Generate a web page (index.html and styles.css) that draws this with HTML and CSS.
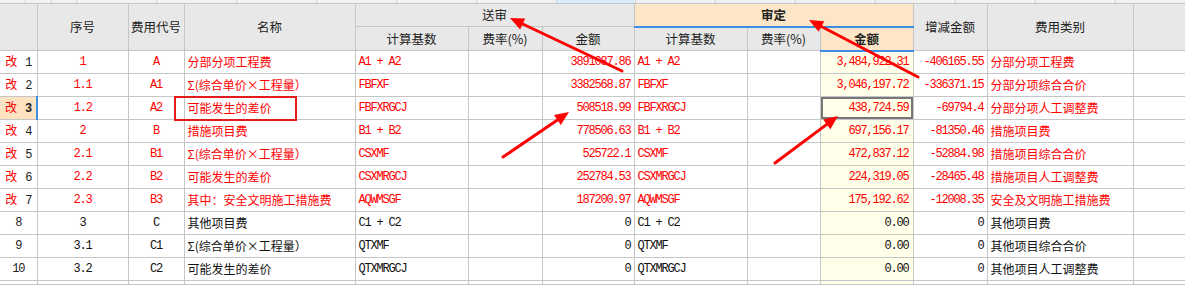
FILE: index.html
```html
<!DOCTYPE html>
<html lang="zh-CN">
<head>
<meta charset="utf-8">
<title>费用汇总</title>
<link rel="stylesheet" href="styles.css">
</head>
<body>
<div class="strip">
  <span class="s26"></span><span class="s26"></span><span class="s25"></span>
  <span></span><span></span><span></span><span></span><span></span><span></span>
  <span class="blue"></span><span></span><span></span><span></span><span></span><span></span><span></span>
</div>
<table class="grid">
  <colgroup>
    <col style="width:37px"><col style="width:91px"><col style="width:56px"><col style="width:171px">
    <col style="width:113px"><col style="width:74px"><col style="width:92px">
    <col style="width:113px"><col style="width:73px"><col style="width:93px">
    <col style="width:74px"><col style="width:146px"><col style="width:52px">
  </colgroup>
  <thead>
    <tr class="h1">
      <th rowspan="2" class="first"></th>
      <th rowspan="2">序号</th>
      <th rowspan="2">费用代号</th>
      <th rowspan="2">名称</th>
      <th colspan="3">送审</th>
      <th colspan="3" class="sd">审定</th>
      <th rowspan="2">增减金额</th>
      <th rowspan="2">费用类别</th>
      <th rowspan="2" class="last"></th>
    </tr>
    <tr class="h2">
      <th>计算基数</th><th>费率(%)</th><th>金额</th>
      <th>计算基数</th><th>费率(%)</th><th class="sd sdje">金额</th>
    </tr>
  </thead>
  <tbody>
    <tr class="r red">
      <td class="first"><span class="gai">改</span><span class="rn">1</span></td>
      <td class="c mono">1</td><td class="c mono">A</td><td class="l">分部分项工程费</td>
      <td class="l mono">A1 + A2</td><td></td><td class="rt mono">3891087.86</td>
      <td class="l mono">A1 + A2</td><td></td><td class="rt mono ye">3,484,922.31</td>
      <td class="rt mono">-406165.55</td><td class="l">分部分项工程费</td><td class="last"></td>
    </tr>
    <tr class="r red">
      <td class="first"><span class="gai">改</span><span class="rn">2</span></td>
      <td class="c mono">1.1</td><td class="c mono">A1</td><td class="l">Σ(综合单价×工程量）</td>
      <td class="l mono">FBFXF</td><td></td><td class="rt mono">3382568.87</td>
      <td class="l mono">FBFXF</td><td></td><td class="rt mono ye">3,046,197.72</td>
      <td class="rt mono">-336371.15</td><td class="l">分部分项综合合价</td><td class="last"></td>
    </tr>
    <tr class="r red">
      <td class="first cur"><span class="gai">改</span><span class="rn b">3</span></td>
      <td class="c mono">1.2</td><td class="c mono">A2</td><td class="l">可能发生的差价</td>
      <td class="l mono">FBFXRGCJ</td><td></td><td class="rt mono">508518.99</td>
      <td class="l mono">FBFXRGCJ</td><td></td><td class="rt mono ye sel">438,724.59</td>
      <td class="rt mono">-69794.4</td><td class="l">分部分项人工调整费</td><td class="last"></td>
    </tr>
    <tr class="r red">
      <td class="first"><span class="gai">改</span><span class="rn">4</span></td>
      <td class="c mono">2</td><td class="c mono">B</td><td class="l">措施项目费</td>
      <td class="l mono">B1 + B2</td><td></td><td class="rt mono">778506.63</td>
      <td class="l mono">B1 + B2</td><td></td><td class="rt mono ye">697,156.17</td>
      <td class="rt mono">-81350.46</td><td class="l">措施项目费</td><td class="last"></td>
    </tr>
    <tr class="r red">
      <td class="first"><span class="gai">改</span><span class="rn">5</span></td>
      <td class="c mono">2.1</td><td class="c mono">B1</td><td class="l">Σ(综合单价×工程量）</td>
      <td class="l mono">CSXMF</td><td></td><td class="rt mono">525722.1</td>
      <td class="l mono">CSXMF</td><td></td><td class="rt mono ye">472,837.12</td>
      <td class="rt mono">-52884.98</td><td class="l">措施项目综合合价</td><td class="last"></td>
    </tr>
    <tr class="r red">
      <td class="first"><span class="gai">改</span><span class="rn">6</span></td>
      <td class="c mono">2.2</td><td class="c mono">B2</td><td class="l">可能发生的差价</td>
      <td class="l mono">CSXMRGCJ</td><td></td><td class="rt mono">252784.53</td>
      <td class="l mono">CSXMRGCJ</td><td></td><td class="rt mono ye">224,319.05</td>
      <td class="rt mono">-28465.48</td><td class="l">措施项目人工调整费</td><td class="last"></td>
    </tr>
    <tr class="r red">
      <td class="first"><span class="gai">改</span><span class="rn">7</span></td>
      <td class="c mono">2.3</td><td class="c mono">B3</td><td class="l">其中：安全文明施工措施费</td>
      <td class="l mono">AQWMSGF</td><td></td><td class="rt mono">187200.97</td>
      <td class="l mono">AQWMSGF</td><td></td><td class="rt mono ye">175,192.62</td>
      <td class="rt mono">-12008.35</td><td class="l">安全及文明施工措施费</td><td class="last"></td>
    </tr>
    <tr class="r">
      <td class="first c mono">8</td>
      <td class="c mono">3</td><td class="c mono">C</td><td class="l">其他项目费</td>
      <td class="l mono">C1 + C2</td><td></td><td class="rt mono">0</td>
      <td class="l mono">C1 + C2</td><td></td><td class="rt mono ye">0.00</td>
      <td class="rt mono">0</td><td class="l">其他项目费</td><td class="last"></td>
    </tr>
    <tr class="r">
      <td class="first c mono">9</td>
      <td class="c mono">3.1</td><td class="c mono">C1</td><td class="l">Σ(综合单价×工程量）</td>
      <td class="l mono">QTXMF</td><td></td><td class="rt mono">0</td>
      <td class="l mono">QTXMF</td><td></td><td class="rt mono ye">0.00</td>
      <td class="rt mono">0</td><td class="l">其他项目综合合价</td><td class="last"></td>
    </tr>
    <tr class="r">
      <td class="first c mono">10</td>
      <td class="c mono">3.2</td><td class="c mono">C2</td><td class="l">可能发生的差价</td>
      <td class="l mono">QTXMRGCJ</td><td></td><td class="rt mono">0</td>
      <td class="l mono">QTXMRGCJ</td><td></td><td class="rt mono ye">0.00</td>
      <td class="rt mono">0</td><td class="l">其他项目人工调整费</td><td class="last"></td>
    </tr>
    <tr class="stub">
      <td class="first"></td><td></td><td></td><td></td><td></td><td></td><td></td>
      <td></td><td></td><td class="ye"></td><td></td><td></td><td class="last"></td>
    </tr>
  </tbody>
</table>
<svg class="marks" width="1185" height="285" viewBox="0 0 1185 285">
  <rect x="175" y="97" width="121" height="23" class="box"/>
  <line x1="622" y1="71" x2="522.7" y2="24" class="ar"/>
  <polygon points="510,18 525.2,18.6 520.1,29.4" class="hd"/>
  <line x1="918" y1="77" x2="821.4" y2="26.5" class="ar"/>
  <polygon points="809,20 824.2,21.2 818.6,31.8" class="hd"/>
  <line x1="503" y1="157" x2="557.4" y2="119.9" class="ar"/>
  <polygon points="569,112 560.8,124.9 554,114.9" class="hd"/>
  <line x1="775" y1="163" x2="826.8" y2="124.4" class="ar"/>
  <polygon points="838,116 830.4,129.2 823.2,119.6" class="hd"/>
</svg>
</body>
</html>
```
FILE: styles.css
```css
html, body {
  margin: 0;
  padding: 0;
}
body {
  width: 1185px;
  height: 285px;
  overflow: hidden;
  position: relative;
  background: #ffffff;
  font-family: "Noto Sans CJK SC", "Noto Sans", sans-serif;
  font-size: 12px;
  color: #111;
}
.strip {
  display: flex;
  height: 3px;
  background: #f1f1f1;
}
.strip span {
  flex: 0 0 80px;
  box-sizing: border-box;
  border-right: 1px solid #d2d2d2;
}
.strip span.s26 { flex-basis: 26px; }
.strip span.s25 { flex-basis: 25px; }
.strip span.blue { background: #dcebf8; flex-basis: 79px; }

.grid {
  border-collapse: collapse;
  table-layout: fixed;
  width: 1185px;
}
.grid th,
.grid td {
  border: 1px solid #c6c6c6;
  padding: 0;
  overflow: hidden;
  white-space: nowrap;
  line-height: 16px;
}
.grid th {
  background: #e8e8e8;
  font-weight: normal;
  color: #222;
  font-size: 12.5px;
  text-align: center;
}
.grid .first { border-left: none; }
.grid .last { border-right: none; }
.h1 { height: 23px; }
.h2 { height: 24px; }
.grid th.sd {
  background: #fde6c8;
  font-weight: bold;
  border-bottom: 2px solid #3d8ee4;
}
.r { height: 23px; }
.stub { height: 4px; }
.stub td { line-height: 3px; }
.red td { color: #ff0000; }
.grid td.first {
  text-align: center;
  color: #222;
}
.grid td.cur {
  background: #fde3c2;
  border-right: 2px solid #3d8ee4;
}
.gai {
  color: #ff0000;
  font-size: 12px;
}
.rn {
  display: inline-block;
  width: 6px;
  margin-left: 8px;
  font-family: "Liberation Mono", monospace;
  font-size: 12px;
  letter-spacing: -1.2px;
  color: #222;
}
.rn.b { font-weight: bold; }
.mono {
  font-family: "Liberation Mono", "Noto Sans CJK SC", monospace;
  font-size: 12px;
  letter-spacing: -1.2px;
}
.grid td.c { text-align: center; }
.grid td.l { text-align: left; padding-left: 3px; }
.grid td.rt { text-align: right; padding-right: 3px; }
.grid td.ye { background: #ffffea; padding-right: 4px; }
.grid td.sel { box-shadow: inset 0 0 0 2px #777777; }

.marks {
  position: absolute;
  left: 0;
  top: 0;
  pointer-events: none;
}
.box {
  fill: none;
  stroke: #e41b1b;
  stroke-width: 2;
}
.ar {
  stroke: #ff0000;
  stroke-width: 3;
  stroke-linecap: round;
}
.hd { fill: #ff0000; }
```
